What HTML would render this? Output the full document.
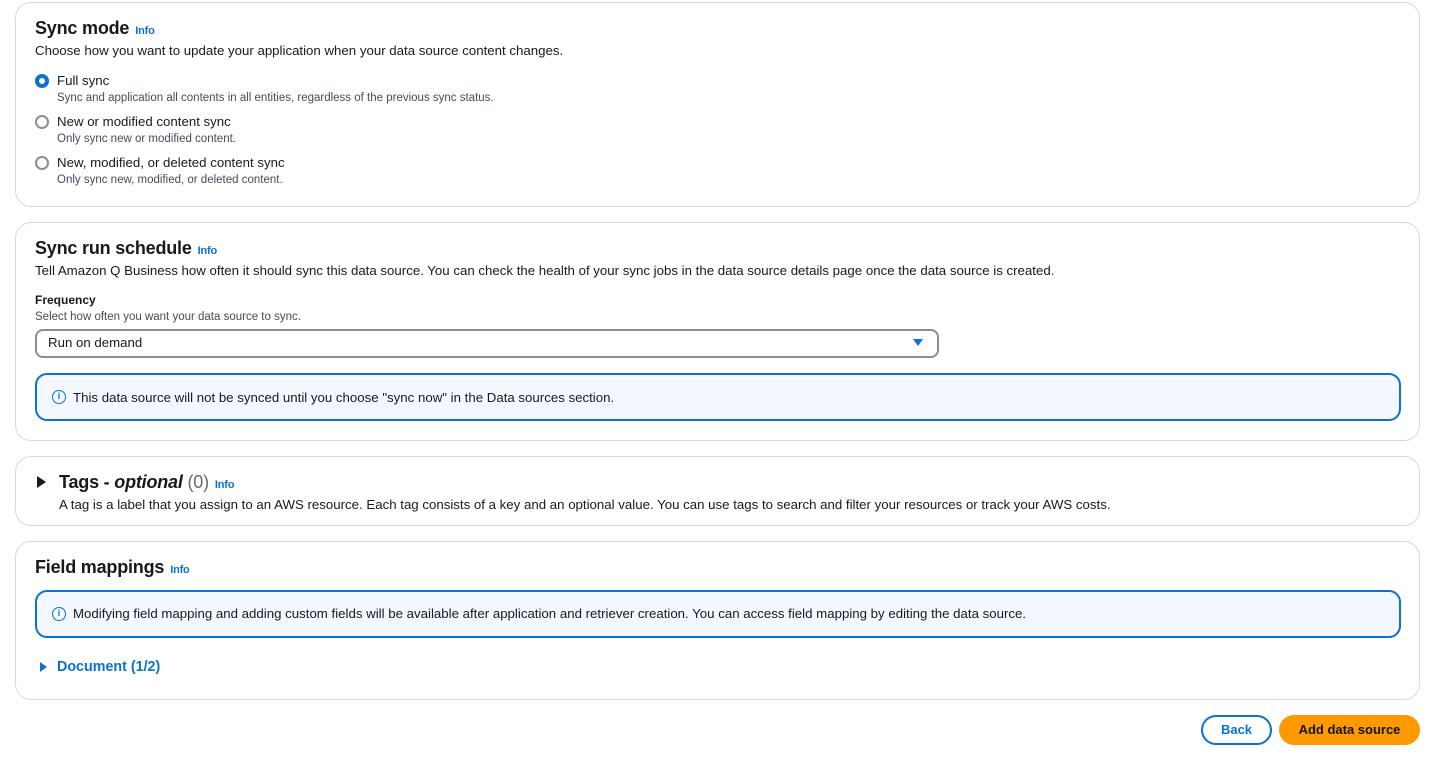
<!DOCTYPE html>
<html><head><meta charset="utf-8"><style>
*{margin:0;padding:0;box-sizing:border-box}
body{width:1430px;height:757px;background:#fff;font-family:"Liberation Sans",sans-serif;color:#16191f;position:relative;overflow:hidden}
.p{position:absolute;left:15px;width:1405px;border:1px solid #d5dbdb;border-radius:16px;background:#fff}
.a{position:absolute;white-space:nowrap}
h2{font-size:18px;font-weight:bold;letter-spacing:-0.2px}
.info{color:#0972d3;font-size:11px;font-weight:bold;margin-left:6px}
.t13{font-size:13.25px;color:#16191f}
.t11{font-size:11.5px;color:#414d5c}
.radio{position:absolute;width:14px;height:14px;border-radius:50%;border:2px solid #8c8c94}
.radio.on{border:4px solid #0972d3}
.alert{position:absolute;left:35px;width:1366px;border:2px solid #0972d3;border-radius:12px;background:#f2f8fd}
.ic{position:absolute;width:14px;height:14px;border:1.8px solid #0972d3;border-radius:50%;color:#0972d3;font-size:9px;font-weight:bold;text-align:center;line-height:11px}
</style></head><body>
<div class="p" style="top:2px;height:205px"></div>
<div class="a" style="left:35px;top:18px"><h2>Sync mode<span class="info">Info</span></h2></div>
<div class="a t13" style="left:35px;top:43px">Choose how you want to update your application when your data source content changes.</div>
<div class="radio on" style="left:35px;top:74px"></div>
<div class="a t13" style="left:57px;top:73px">Full sync</div>
<div class="a t11" style="left:57px;top:92px">Sync and application all contents in all entities, regardless of the previous sync status.</div>
<div class="radio" style="left:35px;top:115px"></div>
<div class="a t13" style="left:57px;top:114px">New or modified content sync</div>
<div class="a t11" style="left:57px;top:133px">Only sync new or modified content.</div>
<div class="radio" style="left:35px;top:156px"></div>
<div class="a t13" style="left:57px;top:155px">New, modified, or deleted content sync</div>
<div class="a t11" style="left:57px;top:174px">Only sync new, modified, or deleted content.</div>

<div class="p" style="top:222px;height:219px"></div>
<div class="a" style="left:35px;top:238px"><h2>Sync run schedule<span class="info">Info</span></h2></div>
<div class="a t13" style="left:35px;top:263px">Tell Amazon Q Business how often it should sync this data source. You can check the health of your sync jobs in the data source details page once the data source is created.</div>
<div class="a" style="left:35px;top:293px;font-size:12px;font-weight:bold">Frequency</div>
<div class="a t11" style="left:35px;top:311px">Select how often you want your data source to sync.</div>
<div class="a" style="left:35px;top:329px;width:904px;height:29px;border:2px solid #8c8c94;border-radius:8px"></div>
<div class="a t13" style="left:48px;top:335px">Run on demand</div>
<div class="a" style="left:913px;top:339px;width:0;height:0;border-left:5px solid transparent;border-right:5px solid transparent;border-top:7px solid #0972d3"></div>
<div class="alert" style="top:373px;height:48px"></div>
<div class="ic" style="left:52px;top:390px">i</div>
<div class="a t13" style="left:73px;top:390px">This data source will not be synced until you choose "sync now" in the Data sources section.</div>

<div class="p" style="top:456px;height:70px"></div>
<div class="a" style="left:37px;top:476px;width:0;height:0;border-top:6px solid transparent;border-bottom:6px solid transparent;border-left:9px solid #16191f"></div>
<div class="a" style="left:59px;top:472px"><h2>Tags - <i>optional</i> <span style="font-weight:normal;color:#5f6b7a">(0)</span><span class="info">Info</span></h2></div>
<div class="a t13" style="left:59px;top:497px">A tag is a label that you assign to an AWS resource. Each tag consists of a key and an optional value. You can use tags to search and filter your resources or track your AWS costs.</div>

<div class="p" style="top:541px;height:159px"></div>
<div class="a" style="left:35px;top:557px"><h2>Field mappings<span class="info">Info</span></h2></div>
<div class="alert" style="top:590px;height:48px"></div>
<div class="ic" style="left:52px;top:607px">i</div>
<div class="a t13" style="left:73px;top:606px">Modifying field mapping and adding custom fields will be available after application and retriever creation. You can access field mapping by editing the data source.</div>
<div class="a" style="left:40px;top:662px;width:0;height:0;border-top:5px solid transparent;border-bottom:5px solid transparent;border-left:7px solid #0972d3"></div>
<div class="a" style="left:57px;top:659px;font-size:14.3px;font-weight:bold;color:#0972d3">Document (1/2)</div>

<div class="a" style="left:1201px;top:715px;width:71px;height:30px;border:2px solid #0972d3;border-radius:16px;color:#0972d3;font-size:13px;font-weight:bold;text-align:center;line-height:26px">Back</div>
<div class="a" style="left:1279px;top:715px;width:141px;height:30px;background:#ff9900;border-radius:16px;color:#0f141a;font-size:13px;font-weight:bold;text-align:center;line-height:30px">Add data source</div>
</body></html>
